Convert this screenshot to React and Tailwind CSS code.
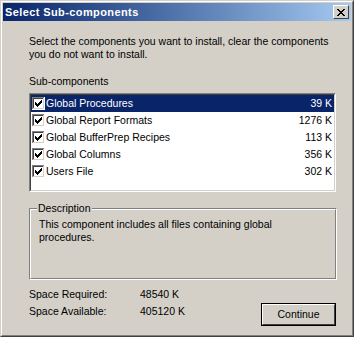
const items = [
  { name: "Global Procedures", size: "39 K" },
  { name: "Global Report Formats", size: "1276 K" },
  { name: "Global BufferPrep Recipes", size: "113 K" },
  { name: "Global Columns", size: "356 K" },
  { name: "Users File", size: "302 K" },
];

function CheckBox() {
  // classic 13x13 sunken checkbox with pixel check mark
  return (
    <svg width="13" height="13" viewBox="0 0 13 13" shapeRendering="crispEdges" className="shrink-0">
      <rect x="0" y="0" width="13" height="13" fill="#ffffff" />
      <path d="M0 0h12v1H1v11H0z" fill="#808080" />
      <path d="M1 1h10v1H2v9H1z" fill="#404040" />
      <path d="M11 1h1v11H1v-1h10z" fill="#d4d0c8" />
      <path
        d="M9 3h1v1H9z M8 4h2v1H8z M3 5h1v1H3z M7 5h3v1H7z M3 6h2v1H3z M6 6h3v1H6z M3 7h5v1H3z M4 8h3v1H4z M5 9h1v1H5z"
        fill="#000000"
      />
    </svg>
  );
}

export default function App() {
  return (
    <div
      className="w-[354px] h-[337px] bg-[#d4d0c8] border border-t-[#d4d0c8] border-l-[#d4d0c8] border-r-[#404040] border-b-[#404040] text-[10.5px] text-black"
      style={{ fontFamily: '"Liberation Sans", Arial, sans-serif' }}
    >
      <div className="h-full border border-t-white border-l-white border-r-[#808080] border-b-[#808080] p-px flex flex-col">
        {/* title bar */}
        <div className="h-[18px] bg-linear-to-r from-[#0a246a] to-[#a6caf0] flex items-center justify-between pl-[2px] pr-[2px]">
          <span className="text-white font-bold text-[11px] tracking-[0.4px] leading-[13px]">Select Sub-components</span>
          <div className="w-[16px] h-[14px] bg-[#d4d0c8] border border-t-white border-l-white border-r-[#404040] border-b-[#404040] flex items-center justify-center">
            <svg width="8" height="7" viewBox="0 0 8 7" shapeRendering="crispEdges">
              <path
                d="M0 0h2v1h1v1h2V1h1V0h2v1H7v1H6v1H5v1h1v1h1v1h1v1H6V6H5V5H3v1H2v1H0V6h1V5h1V4h1V3H2V2H1V1H0z"
                fill="#000"
              />
            </svg>
          </div>
        </div>

        {/* body */}
        <div className="flex flex-col pl-[26px] pt-[14px]">
          <p className="leading-[13px]">
            Select the components you want to install, clear the components
            <br />
            you do not want to install.
          </p>
          <div className="mt-[14px] leading-[13px]">Sub-components</div>

          <div className="mt-[5px] w-[307px] h-[99px] border border-t-[#808080] border-l-[#808080] border-r-white border-b-white">
            <div className="h-full bg-white border border-t-[#404040] border-l-[#404040] border-r-[#d4d0c8] border-b-[#d4d0c8]">
              {items.map((it, i) => (
                <div
                  key={it.name}
                  className={
                    "h-[17px] flex items-center pl-[1px] pr-[2px] " +
                    (i === 0 ? "bg-[#0a246a] text-white" : "")
                  }
                >
                  <CheckBox />
                  <span className="ml-[1px] leading-[13px]">{it.name}</span>
                  <span className="ml-auto leading-[13px]">{it.size}</span>
                </div>
              ))}
            </div>
          </div>

          {/* description group box */}
          <div className="relative mt-[16px] w-[308px] h-[72px] border border-t-[#808080] border-l-[#808080] border-r-white border-b-white">
            <div className="h-full border border-t-white border-l-white border-r-[#808080] border-b-[#808080] pl-[8px] pt-[8px]">
              <p className="leading-[13px]">
                This component includes all files containing global
                <br />
                procedures.
              </p>
            </div>
            <span className="absolute left-[7px] top-[-7px] bg-[#d4d0c8] px-[1px] leading-[13px]">Description</span>
          </div>

          <div className="flex mt-[6px]">
            <div className="flex flex-col leading-[17px]">
              <div className="flex">
                <span className="w-[111px]">Space Required:</span>
                <span>48540 K</span>
              </div>
              <div className="flex">
                <span className="w-[111px]">Space Available:</span>
                <span>405120 K</span>
              </div>
            </div>
            <div className="ml-auto mr-[15px] mt-[17px] w-[75px] h-[23px] border border-black">
              <div className="h-full bg-[#d4d0c8] border border-t-white border-l-white border-r-[#404040] border-b-[#404040] flex items-center justify-center">
                <span className="leading-[13px]">Continue</span>
              </div>
            </div>
          </div>
        </div>
      </div>
    </div>
  );
}
